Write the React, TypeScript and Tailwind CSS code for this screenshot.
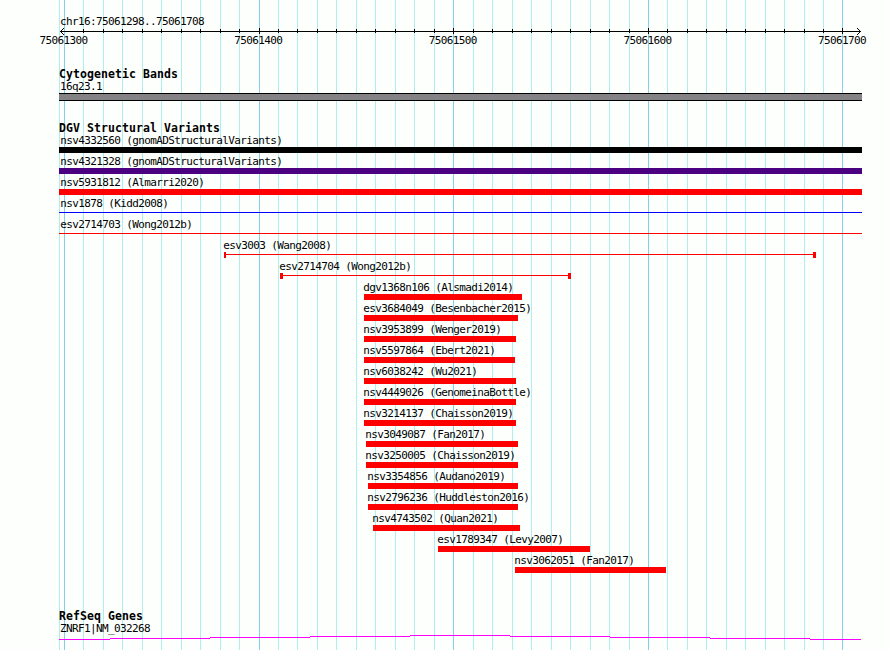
const MAJOR = [64, 259, 453, 648, 842];
const MINOR = [
  59, 83, 103, 122, 142, 161, 181, 200, 220, 239, 278, 297, 317, 336, 356, 375, 395, 414, 434,
  473, 492, 512, 531, 551, 570, 590, 609, 629, 667, 687, 706, 726, 745, 765, 784, 804, 823,
];

type Variant = {
  label: string;
  start: number;
  end: number;
  color: string;
  kind?: 'line' | 'span';
  cap?: number;
};

const RED = 'bg-[#ff0000]';

const variants: Variant[] = [
  { label: 'nsv4332560 (gnomADStructuralVariants)', start: 59, end: 862, color: 'bg-black' },
  { label: 'nsv4321328 (gnomADStructuralVariants)', start: 59, end: 862, color: 'bg-[#4b0082]' },
  { label: 'nsv5931812 (Almarri2020)', start: 59, end: 862, color: RED },
  { label: 'nsv1878 (Kidd2008)', start: 59, end: 862, color: 'bg-[#0000ff]', kind: 'line' },
  { label: 'esv2714703 (Wong2012b)', start: 59, end: 862, color: RED, kind: 'line' },
  { label: 'esv3003 (Wang2008)', start: 224, end: 816, color: RED, kind: 'span', cap: 2 },
  { label: 'esv2714704 (Wong2012b)', start: 280, end: 571, color: RED, kind: 'span', cap: 3 },
  { label: 'dgv1368n106 (Alsmadi2014)', start: 364, end: 522, color: RED },
  { label: 'esv3684049 (Besenbacher2015)', start: 364, end: 518, color: RED },
  { label: 'nsv3953899 (Wenger2019)', start: 364, end: 516, color: RED },
  { label: 'nsv5597864 (Ebert2021)', start: 364, end: 515, color: RED },
  { label: 'nsv6038242 (Wu2021)', start: 364, end: 516, color: RED },
  { label: 'nsv4449026 (GenomeinaBottle)', start: 364, end: 516, color: RED },
  { label: 'nsv3214137 (Chaisson2019)', start: 364, end: 516, color: RED },
  { label: 'nsv3049087 (Fan2017)', start: 366, end: 518, color: RED },
  { label: 'nsv3250005 (Chaisson2019)', start: 366, end: 518, color: RED },
  { label: 'nsv3354856 (Audano2019)', start: 368, end: 518, color: RED },
  { label: 'nsv2796236 (Huddleston2016)', start: 368, end: 518, color: RED },
  { label: 'nsv4743502 (Quan2021)', start: 373, end: 520, color: RED },
  { label: 'esv1789347 (Levy2007)', start: 438, end: 590, color: RED },
  { label: 'nsv3062051 (Fan2017)', start: 515, end: 666, color: RED },
];

const small =
  "h-3 whitespace-pre font-['DejaVu_Sans_Mono',monospace] text-[11px] leading-3 tracking-[-0.622px] text-black";
const heading =
  "h-3 whitespace-pre pl-[59px] font-['DejaVu_Sans_Mono',monospace] text-[11.5px] font-bold leading-[10px] tracking-[0.077px] text-black";

function GridLines() {
  return (
    <svg className="absolute inset-0" width="890" height="650" shapeRendering="crispEdges">
      {MINOR.map((x) => (
        <rect key={x} x={x} y="0" width="1" height="650" fill="#afeeee" />
      ))}
      {MAJOR.map((x) => (
        <rect key={x} x={x} y="0" width="1" height="650" fill="#87ceeb" />
      ))}
    </svg>
  );
}

function Ruler() {
  return (
    <svg className="-mt-px block" width="890" height="8" shapeRendering="crispEdges">
      <rect x="60" y="4" width="801" height="1" />
      {MINOR.slice(1).map((x) => (
        <rect key={x} x={x} y="2" width="1" height="4" />
      ))}
      {MAJOR.slice(1).map((x) => (
        <rect key={x} x={x} y="1" width="1" height="6" />
      ))}
      {[1, 2, 3].map((d) => (
        <g key={d}>
          <rect x={60 + d} y={4 - d} width="1" height="1" />
          <rect x={60 + d} y={4 + d} width="1" height="1" />
          <rect x={860 - d} y={4 - d} width="1" height="1" />
          <rect x={860 - d} y={4 + d} width="1" height="1" />
        </g>
      ))}
    </svg>
  );
}

function VariantRow({ label, start, end, color, kind, cap }: Variant) {
  return (
    <div className="h-[21px]">
      <div className={small} style={{ paddingLeft: start === 59 ? 60.3 : start - 0.7 }}>
        {label}
      </div>
      <div className="flex h-1.5" style={{ marginLeft: start, width: end - start }}>
        {kind === 'span' && <div className={color} style={{ width: cap }} />}
        <div className={`flex-1 ${kind ? 'mt-0.5 h-px' : 'h-1.5'} ${color}`} />
        {kind === 'span' && <div className={`w-[3px] ${color}`} />}
      </div>
    </div>
  );
}

export default function App() {
  return (
    <div className="relative h-[650px] w-[890px] overflow-hidden bg-[#fdfffc]">
      <GridLines />
      <div className="relative pt-4">
        {/* Scale */}
        <div className={`${small} pl-[60px]`}>chr16:75061298..75061708</div>
        <Ruler />
        <div className="flex w-[866px] justify-between pl-[39.5px]">
          {['75061300', '75061400', '75061500', '75061600', '75061700'].map((pos) => (
            <div key={pos} className={`${small} w-12`}>
              {pos}
            </div>
          ))}
        </div>

        {/* Cytogenetic bands */}
        <div className="pt-[22px]">
          <div className={heading}>Cytogenetic Bands</div>
          <div className={`${small} pl-[60px]`}>16q23.1</div>
          <div className="ml-[59px] h-2 w-[803px] border-y border-black bg-[#848284]" />
        </div>

        {/* Structural variants */}
        <div className="pt-[22px]">
          <div className={heading}>DGV Structural Variants</div>
          <div>
            {variants.map((v) => (
              <VariantRow key={v.label} {...v} />
            ))}
          </div>
        </div>

        {/* Genes */}
        <div className="pt-[35px]">
          <div className={heading}>RefSeq Genes</div>
          <div className={`${small} pl-[60px]`}>ZNRF1|NM_032268</div>
          <svg className="-mt-px block" width="890" height="8" shapeRendering="crispEdges" fill="#ff00ff">
            <rect x="59" y="5" width="51" height="1" />
            <rect x="110" y="4" width="100" height="1" />
            <rect x="210" y="3" width="100" height="1" />
            <rect x="310" y="2" width="100" height="1" />
            <rect x="410" y="1" width="100" height="1" />
            <rect x="510" y="2" width="100" height="1" />
            <rect x="610" y="3" width="100" height="1" />
            <rect x="710" y="4" width="100" height="1" />
            <rect x="810" y="5" width="51" height="1" />
          </svg>
        </div>
      </div>
    </div>
  );
}
